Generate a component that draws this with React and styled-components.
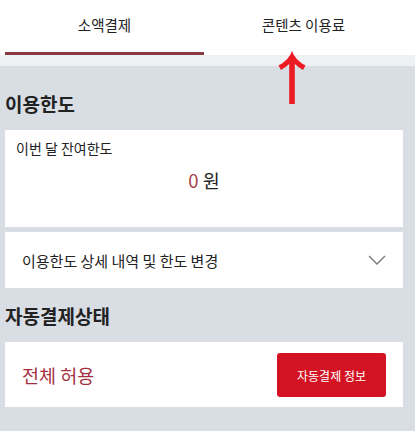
import React, { useState } from 'react';
import styled, { createGlobalStyle } from 'styled-components';

const GlobalStyle = createGlobalStyle`
  html, body {
    margin: 0;
    padding: 0;
    background: #d9dee5;
    font-family: "Noto Sans CJK KR", "Noto Sans", sans-serif;
    color: #222;
  }
`;

const Page = styled.div`
  width: 415px;
  height: 431px;
  position: relative;
  overflow: hidden;
  background: #d9dee5;
`;

const TabBar = styled.div`
  display: grid;
  grid-template-columns: 199px 199px;
  padding: 0 12px 0 5px;
  height: 55px;
  background: #fff;
`;

const Tab = styled.button`
  border: 0;
  background: none;
  font: inherit;
  font-size: 14.5px;
  color: #222;
  padding: 0 0 3px;
  border-bottom: 3px solid ${(p) => (p.$active ? '#8a3a42' : 'transparent')};
  cursor: pointer;
`;

const Band = styled.div`
  height: 11px;
  background: #eef0f3;
`;

const Content = styled.div`
  padding: 0 12px 0 5px;
  display: flex;
  flex-direction: column;
`;

const Heading = styled.h2`
  margin: 0;
  height: ${(p) => p.$h}px;
  padding-top: ${(p) => p.$top || 0}px;
  box-sizing: border-box;
  display: flex;
  align-items: center;
  font-size: 19px;
  font-weight: 700;
  color: #222;
`;

const Card = styled.div`
  background: #fff;
  margin-bottom: ${(p) => p.$gap || 0}px;
`;

const LimitCard = styled(Card)`
  height: 97px;
  padding: 8px 11px 0;
  box-sizing: border-box;
`;

const LimitLabel = styled.div`
  font-size: 14px;
  color: #222;
`;

const Amount = styled.div`
  margin-top: 9px;
  text-align: center;
  font-size: 18.5px;
  color: #222;
  span {
    color: #a8414b;
  }
`;

const DetailRow = styled(Card)`
  height: 56px;
  display: flex;
  align-items: center;
  justify-content: space-between;
  padding: 0 17px 0 17px;
  box-sizing: border-box;
  font-size: 15px;
  color: #222;
`;

const StatusCard = styled(Card)`
  height: 65px;
  display: flex;
  align-items: center;
  justify-content: space-between;
  padding: 0 17px 0 17px;
  box-sizing: border-box;
`;

const StatusText = styled.div`
  font-size: 18.5px;
  color: #a4303f;
`;

const InfoButton = styled.button`
  width: 109px;
  height: 44px;
  border: 0;
  border-radius: 3px;
  background: #d31323;
  color: #fff;
  font: inherit;
  font-size: 12px;
  margin-top: 1px;
`;

// red annotation arrow laid over the tabs
const Arrow = styled.svg`
  position: absolute;
  left: 278px;
  top: 51px;
`;

export default function App() {
  const [tab, setTab] = useState(0);
  return (
    <Page>
      <GlobalStyle />
      <TabBar>
        <Tab $active={tab === 0} onClick={() => setTab(0)}>소액결제</Tab>
        <Tab $active={tab === 1} onClick={() => setTab(1)}>콘텐츠 이용료</Tab>
      </TabBar>
      <Band />
      <Content>
        <Heading $h={64} $top={10}>이용한도</Heading>
        <LimitCard $gap={5}>
          <LimitLabel>이번 달 잔여한도</LimitLabel>
          <Amount><span>0</span> 원</Amount>
        </LimitCard>
        <DetailRow>
          이용한도 상세 내역 및 한도 변경
          <svg width="18" height="10" viewBox="0 0 18 10">
            <path d="M1 1l8 8 8-8" fill="none" stroke="#777" strokeWidth="1.3" />
          </svg>
        </DetailRow>
        <Heading $h={54}>자동결제상태</Heading>
        <StatusCard>
          <StatusText>전체 허용</StatusText>
          <InfoButton>자동결제 정보</InfoButton>
        </StatusCard>
      </Content>
      <Arrow width="28" height="54" viewBox="0 0 28 54">
        <path
          d="M14 0 Q17 9 27.5 14.5 L25 19 Q20 16 16.8 13 V53 H11.2 V13 Q8 16 3 19 L0.5 14.5 Q11 9 14 0Z"
          fill="#ec1c24"
        />
      </Arrow>
    </Page>
  );
}
